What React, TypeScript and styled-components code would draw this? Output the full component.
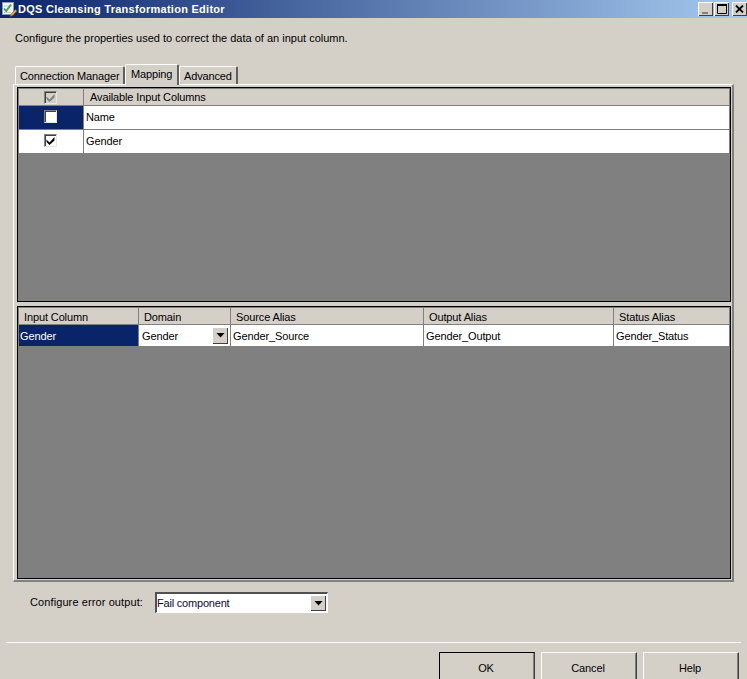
import React from "react";
import styled, { createGlobalStyle } from "styled-components";

const GlobalStyle = createGlobalStyle`
  html, body {
    margin: 0;
    padding: 0;
    background: #d4d0c8;
  }
`;

const Window = styled.div`
  display: flex;
  flex-direction: column;
  width: 747px;
  height: 679px;
  overflow: hidden;
  background: #d4d0c8;
  color: #000;
  font-family: "Liberation Sans", Arial, sans-serif;
  font-size: 11px;
`;

const TitleBar = styled.div`
  display: flex;
  flex: 0 0 18px;
  align-items: center;
  background: linear-gradient(90deg, #0a246a 0%, #a6caf0 100%);
  color: #fff;
  font-weight: bold;
  font-size: 11px;
  padding-left: 1px;
`;

const TitleText = styled.span`
  flex: 1;
  letter-spacing: 0.27px;
`;

const WindowButtons = styled.div`
  display: flex;
  height: 14px;
`;

const WindowButton = styled.div<{ $gap?: number }>`
  display: flex;
  align-items: center;
  justify-content: center;
  width: 15px;
  height: 14px;
  margin-left: ${(p) => p.$gap ?? 0}px;
  background: #d4d0c8;
  box-shadow: inset 1px 1px 0 #fff, inset -1px -1px 0 #404040;
`;

const Description = styled.div`
  flex: 0 0 auto;
  margin: 13px 0 0 15px;
  line-height: 14px;
  height: 14px;
`;

const TabStrip = styled.div`
  display: flex;
  align-items: flex-end;
  height: 20px;
  margin: 19px 0 0 15px;
  letter-spacing: -0.15px;
`;

const Tab = styled.div<{ $active?: boolean; $width: number }>`
  box-sizing: border-box;
  width: ${(p) => p.$width}px;
  height: ${(p) => (p.$active ? 21 : 18)}px;
  margin-bottom: ${(p) => (p.$active ? -1 : 0)}px;
  padding: ${(p) => (p.$active ? "3px 0 0 5px" : "3px 0 0 4px")};
  line-height: 13px;
  white-space: nowrap;
  background: #d4d0c8;
  border-top: 1px solid #fff;
  border-left: 1px solid #fff;
  border-right: 2px solid #606060;
  border-radius: 2px 2px 0 0;
  position: relative;
  z-index: ${(p) => (p.$active ? 1 : 0)};
`;

const Panel = styled.div`
  box-sizing: border-box;
  display: flex;
  flex-direction: column;
  gap: 4px;
  width: 721px;
  height: 498px;
  margin-left: 13px;
  padding: 2px 1px 1px 3px;
  border-top: 1px solid #fff;
  border-left: 1px solid #fff;
  border-right: 2px solid #808080;
  border-bottom: 2px solid #808080;
  letter-spacing: -0.12px;
`;

const GridFrame = styled.div<{ $height: number }>`
  box-sizing: border-box;
  display: flex;
  flex-direction: column;
  flex: 0 0 auto;
  height: ${(p) => p.$height}px;
  background: #808080;
  border: 1px solid #000;
  padding: 1px 1px 0 1px;
`;

const GridRow = styled.div<{ $columns: string; $height: number; $header?: boolean }>`
  display: grid;
  flex: 0 0 auto;
  grid-template-columns: ${(p) => p.$columns};
  height: ${(p) => p.$height}px;
  background: ${(p) => (p.$header ? "#d4d0c8" : "#fff")};
  border-bottom: 1px solid #808080;
`;

const HeaderCell = styled.div<{ $center?: boolean; $pad?: number; $low?: boolean }>`
  display: flex;
  align-items: center;
  justify-content: ${(p) => (p.$center ? "center" : "flex-start")};
  padding-left: ${(p) => p.$pad ?? 5}px;
  padding-right: ${(p) => (p.$center ? 2 : 0)}px;
  padding-top: ${(p) => (p.$low ? 2 : 0)}px;
  border-right: 1px solid #808080;
  white-space: nowrap;
  &:last-child {
    border-right: none;
  }
`;

const BodyCell = styled.div<{ $selected?: boolean; $center?: boolean; $high?: boolean; $pad?: number }>`
  display: flex;
  align-items: center;
  justify-content: ${(p) => (p.$center ? "center" : "flex-start")};
  padding-left: ${(p) => (p.$center ? 0 : p.$pad ?? 2)}px;
  padding-right: ${(p) => (p.$center ? 2 : 0)}px;
  padding-bottom: ${(p) => (p.$high ? 2 : 0)}px;
  background: ${(p) => (p.$selected ? "#0a246a" : "#fff")};
  color: ${(p) => (p.$selected ? "#fff" : "#000")};
  border-right: 1px solid #808080;
  white-space: nowrap;
  &:last-child {
    border-right: none;
  }
`;

const DomainValue = styled.span`
  flex: 1;
  padding-left: 1px;
`;

const CheckBox = styled.div<{ $disabled?: boolean }>`
  display: flex;
  align-items: center;
  justify-content: center;
  box-sizing: border-box;
  width: 13px;
  height: 13px;
  background: ${(p) => (p.$disabled ? "#d4d0c8" : "#fff")};
  border-top: 1px solid #808080;
  border-left: 1px solid #808080;
  border-right: 1px solid #e8e6e0;
  border-bottom: 1px solid #e8e6e0;
  box-shadow: inset 1px 1px 0 #404040;
`;

const ComboArrow = styled.div<{ $width: number; $height: number }>`
  display: flex;
  align-items: center;
  justify-content: center;
  flex: 0 0 auto;
  width: ${(p) => p.$width}px;
  height: ${(p) => p.$height}px;
  background: #d4d0c8;
  box-shadow: inset 1px 1px 0 #fff, inset -1px -1px 0 #404040;
`;

const CellInset = styled.span`
  flex: 0 0 2px;
`;

const ErrorRow = styled.div`
  display: flex;
  align-items: center;
  height: 21px;
  margin: 10px 0 0 30px;
`;

const ErrorLabel = styled.label`
  width: 125px;
  margin-top: -2px;
  letter-spacing: 0.1px;
`;

const ComboBox = styled.div`
  box-sizing: border-box;
  display: flex;
  align-items: center;
  width: 173px;
  height: 21px;
  padding: 1px 1px 1px 0;
  background: #fff;
  border-top: 2px solid #505050;
  border-left: 2px solid #505050;
  border-right: 1px solid #fff;
  border-bottom: 1px solid #fff;
`;

const ComboText = styled.span`
  flex: 1;
  color: #0a0a3a;
  letter-spacing: -0.2px;
`;

const Separator = styled.div`
  height: 1px;
  margin: 29px 6px 0 6px;
  background: #808080;
  border-bottom: 1px solid #fff;
`;

const ButtonRow = styled.div`
  display: flex;
  justify-content: flex-end;
  gap: 6px;
  margin: 9px 8px 0 0;
`;

const DialogButton = styled.div<{ $default?: boolean }>`
  box-sizing: border-box;
  flex: 0 0 auto;
  width: 96px;
  height: 30px;
  padding: 8px 2px 0 0;
  text-align: center;
  line-height: 14px;
  letter-spacing: -0.1px;
  background: #d4d0c8;
  border-top: 1px solid ${(p) => (p.$default ? "#000" : "#fff")};
  border-left: 1px solid ${(p) => (p.$default ? "#000" : "#fff")};
  border-right: 1px solid #404040;
  border-bottom: 1px solid #404040;
  box-shadow: inset -1px 0 0 #808080;
`;

const TitleIcon = () => (
  <svg width="17" height="17" viewBox="0 0 17 17">
    <rect x="1.5" y="1.5" width="11" height="12" fill="#f4f6fa" stroke="#8d9ab0" />
    <path d="M3 5h8M3 11.5h7" stroke="#c4ccd8" fill="none" />
    <path d="M3 7.5l2.2 2.5L10 3.5" stroke="#3aa63f" strokeWidth="1.8" fill="none" />
    <path d="M9 15.5l1-2.5 4.5-4.5 1.5 1.5-4.5 4.5z" fill="#e6a93c" stroke="#6d5220" strokeWidth="0.5" />
  </svg>
);

const CheckMark = () => (
  <svg width="9" height="9" viewBox="0 0 9 9">
    <path d="M0.5 3.5l3 3L8.5 1v3.5L3.5 9 0.5 6z" fill="#000" />
  </svg>
);

const DisabledMark = () => (
  <svg width="9" height="9" viewBox="0 0 9 9">
    <path d="M0.5 3.5l3 3L8.5 1v3.5L3.5 9 0.5 6z" fill="#808080" />
  </svg>
);

const DownArrow = () => (
  <svg width="9" height="5" viewBox="0 0 9 5">
    <path d="M0.5 0h8L4.5 4.5z" fill="#000" />
  </svg>
);

const MinIcon = () => (
  <svg width="9" height="9" viewBox="0 0 9 9">
    <rect x="1" y="7" width="6" height="2" fill="#808080" />
  </svg>
);

const MaxIcon = () => (
  <svg width="10" height="10" viewBox="0 0 10 10">
    <path d="M0.5 1.5h9v8h-9z" fill="none" stroke="#000" />
    <rect x="0" y="0" width="10" height="2" fill="#000" />
  </svg>
);

const CloseIcon = () => (
  <svg width="9" height="8" viewBox="0 0 9 8">
    <path d="M1 0.5l7 7M8 0.5l-7 7" stroke="#000" strokeWidth="1.8" />
  </svg>
);

const inputColumns = "65px 1fr";
const mappingColumns = "120px 92px 193px 190px 1fr";

const App: React.FC = () => (
  <Window>
    <GlobalStyle />
    <TitleBar>
      <TitleIcon />
      <TitleText>DQS Cleansing Transformation Editor</TitleText>
      <WindowButtons>
        <WindowButton>
          <MinIcon />
        </WindowButton>
        <WindowButton $gap={1}>
          <MaxIcon />
        </WindowButton>
        <WindowButton $gap={3}>
          <CloseIcon />
        </WindowButton>
      </WindowButtons>
    </TitleBar>
    <Description>Configure the properties used to correct the data of an input column.</Description>
    <TabStrip>
      <Tab $width={110}>Connection Manager</Tab>
      <Tab $width={54} $active>
        Mapping
      </Tab>
      <Tab $width={59}>Advanced</Tab>
    </TabStrip>
    <Panel>
      <GridFrame $height={215}>
        <GridRow $columns={inputColumns} $height={16} $header>
          <HeaderCell $center $pad={0}>
            <CheckBox $disabled>
              <DisabledMark />
            </CheckBox>
          </HeaderCell>
          <HeaderCell $pad={6}>Available Input Columns</HeaderCell>
        </GridRow>
        <GridRow $columns={inputColumns} $height={23}>
          <BodyCell $selected $center $high>
            <CheckBox />
          </BodyCell>
          <BodyCell $high>Name</BodyCell>
        </GridRow>
        <GridRow $columns={inputColumns} $height={23}>
          <BodyCell $center $high>
            <CheckBox>
              <CheckMark />
            </CheckBox>
          </BodyCell>
          <BodyCell $high>Gender</BodyCell>
        </GridRow>
      </GridFrame>
      <GridFrame $height={273}>
        <GridRow $columns={mappingColumns} $height={16} $header>
          <HeaderCell $low>Input Column</HeaderCell>
          <HeaderCell $low>Domain</HeaderCell>
          <HeaderCell $low>Source Alias</HeaderCell>
          <HeaderCell $low>Output Alias</HeaderCell>
          <HeaderCell $low>Status Alias</HeaderCell>
        </GridRow>
        <GridRow $columns={mappingColumns} $height={21}>
          <BodyCell $selected $pad={1}>
            Gender
          </BodyCell>
          <BodyCell>
            <DomainValue>Gender</DomainValue>
            <ComboArrow $width={16} $height={17}>
              <DownArrow />
            </ComboArrow>
            <CellInset />
          </BodyCell>
          <BodyCell>Gender_Source</BodyCell>
          <BodyCell>Gender_Output</BodyCell>
          <BodyCell>Gender_Status</BodyCell>
        </GridRow>
      </GridFrame>
    </Panel>
    <ErrorRow>
      <ErrorLabel>Configure error output:</ErrorLabel>
      <ComboBox>
        <ComboText>Fail component</ComboText>
        <ComboArrow $width={16} $height={16}>
          <DownArrow />
        </ComboArrow>
      </ComboBox>
    </ErrorRow>
    <Separator />
    <ButtonRow>
      <DialogButton $default>OK</DialogButton>
      <DialogButton>Cancel</DialogButton>
      <DialogButton>Help</DialogButton>
    </ButtonRow>
  </Window>
);

export default App;
